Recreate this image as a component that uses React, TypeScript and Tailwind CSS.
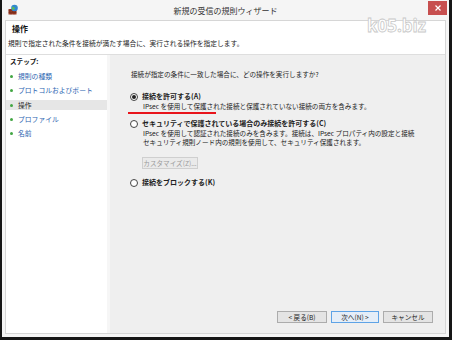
import React from "react";

const F = { fontFamily: '"Noto Sans CJK JP", "Noto Sans", sans-serif' };

function Radio({ on }: { on?: boolean }) {
  return (
    <div className="w-[8px] h-[8px] rounded-full border border-[#444] bg-white flex items-center justify-center shrink-0">
      {on && <div className="w-[4px] h-[4px] rounded-full bg-[#222]" />}
    </div>
  );
}

function Icon() {
  return (
    <svg width="11" height="11" viewBox="0 0 11 11">
      <rect x="0.5" y="5" width="8" height="5.5" fill="#9c3b25" />
      <path d="M0.5 6.8h8M0.5 8.6h8M3 5v1.8M6 5v1.8M1.8 6.8v1.8M4.6 6.8v1.8M7.2 6.8v1.8M3 8.6v1.9M6 8.6v1.9" stroke="#6a2414" strokeWidth="0.5" />
      <circle cx="6.5" cy="4" r="3.3" fill="#2f86d6" />
      <path d="M4.5 2.5c1 0 1.4 1 2.2 1.2s.6 1.4-.4 1.5-.8 1.2-1.6.9S3.6 4.5 4 3.6 3.8 2.5 4.5 2.5z" fill="#5cb85c" />
      <path d="M7.6 1.4c.8.2 1.4.8 1.6 1.4-.6.2-1-.3-1.5-.5z" fill="#5cb85c" />
    </svg>
  );
}

function Step({ label, active }: { label: string; active?: boolean }) {
  return (
    <div className={`h-[10px] flex items-center pl-[4px] ${active ? "bg-[#e6e6e6]" : ""}`}>
      <div className="w-[3px] h-[3px] rounded-full bg-[#43a643] shrink-0" />
      <span className={`ml-[5px] text-[6.8px] leading-[9px] ${active ? "text-[#222]" : "text-[#2a63b0]"}`}>{label}</span>
    </div>
  );
}

function Btn({ label, w, def, disabled }: { label: string; w: string; def?: boolean; disabled?: boolean }) {
  return (
    <div
      className={`${w} h-[12px] flex items-center justify-center text-[6.6px] leading-[9px] border ${
        def ? "border-[#5ea3e6] bg-[#e5eef8]" : disabled ? "border-[#cfcfcf] bg-[#eaeaea]" : "border-[#acacac] bg-[#e4e4e4]"
      } ${disabled ? "text-[#9a9a9a]" : "text-[#222]"}`}
    >
      {label}
    </div>
  );
}

export default function App() {
  return (
    <div style={F} className="relative w-[452px] h-[340px] bg-white">
      <div className="w-[452px] h-[340px] bg-[#f5f5f5] border-l-[2px] border-r-[3px] border-b-[3px] border-[#161616] flex flex-col">
        {/* title bar */}
        <div className="h-[20px] relative flex items-center justify-center">
          <div className="absolute left-[6px] top-[4px]">
            <Icon />
          </div>
          <span className="text-[8px] text-[#333] leading-[10px] mt-[1px]">新規の受信の規則ウィザード</span>
          <div className="absolute right-[2px] top-[1px] w-[19px] h-[14px] bg-[#c74f4f] flex items-center justify-center">
            <svg width="6" height="6" viewBox="0 0 6 6">
              <path d="M0.5 0.5L5.5 5.5M5.5 0.5L0.5 5.5" stroke="#fff" strokeWidth="1.2" />
            </svg>
          </div>
        </div>
        {/* client */}
        <div className="flex-1 mx-[3px] mb-[3px] border border-[#d6d6d6] flex flex-col bg-[#f0f0f0]">
          <div className="h-[34px] bg-white flex flex-col border-b border-[#dedede]">
            <div className="pl-[6px] pt-[3px] text-[8px] leading-[10px] font-bold text-[#111]">操作</div>
            <div className="pl-[2px] mt-[4.5px] text-[6.75px] leading-[9px] text-[#222]">
              規則で指定された条件を接続が満たす場合に、実行される操作を指定します。
            </div>
          </div>
          <div className="flex-1 flex">
            {/* left steps */}
            <div className="w-[104px] bg-white border-r-[3px] border-[#f6f6f6] flex flex-col">
              <div className="pl-[4px] pt-[2px] text-[6.6px] leading-[9px] font-bold text-[#111]">ステップ:</div>
              <div className="mt-[5.5px] flex flex-col gap-[4.3px]">
                <Step label="規則の種類" />
                <Step label="プロトコルおよびポート" />
                <Step label="操作" active />
                <Step label="プロファイル" />
                <Step label="名前" />
              </div>
            </div>
            {/* right content */}
            <div className="flex-1 flex flex-col bg-[#efefef]">
              <div className="pl-[21px] pt-[14.5px] flex flex-col text-[#222]">
                <div className="text-[6.6px] leading-[9px]">接続が指定の条件に一致した場合に、どの操作を実行しますか?</div>
                <div className="mt-[13.7px] flex items-center h-[9px] -ml-[1px]">
                  <Radio on />
                  <span className="ml-[4px] text-[7px] leading-[9px] font-bold">接続を許可する(A)</span>
                </div>
                <div className="mt-[1px] pl-[12px] text-[6.6px] leading-[9px]">
                  IPsec を使用して保護された接続と保護されていない接続の両方を含みます。
                </div>
                <div className="mt-[8.3px] flex items-center h-[9px] -ml-[1px]">
                  <Radio />
                  <span className="ml-[4px] text-[7px] leading-[9px] font-bold">セキュリティで保護されている場合のみ接続を許可する(C)</span>
                </div>
                <div className="mt-[0.3px] pl-[12px] text-[6.6px] leading-[9px]">
                  <div>IPsec を使用して認証された接続のみを含みます。接続は、IPsec プロパティ内の設定と接続</div>
                  <div>セキュリティ規則ノード内の規則を使用して、セキュリティ保護されます。</div>
                </div>
                <div className="mt-[10.5px] pl-[11px]">
                  <Btn label="カスタマイズ(Z)..." w="w-[56px]" disabled />
                </div>
                <div className="mt-[9.2px] flex items-center h-[9px] -ml-[1px]">
                  <Radio />
                  <span className="ml-[4px] text-[7px] leading-[9px] font-bold">接続をブロックする(K)</span>
                </div>
              </div>
              <div className="flex-1" />
              <div className="flex justify-end pr-[12px] pb-[10px] gap-[4px]">
                <Btn label="< 戻る(B)" w="w-[50px]" />
                <Btn label="次へ(N) >" w="w-[48px]" def />
                <Btn label="キャンセル" w="w-[50px]" />
              </div>
            </div>
          </div>
        </div>
      </div>
      {/* annotation underline */}
      <div className="absolute left-[128px] top-[112px] w-[88px] h-[2px] bg-[#e8141b]" />
      {/* watermark */}
      <div
        className="absolute left-[367px] top-[16px] text-[17px] leading-[20px] font-bold text-white [-webkit-text-stroke:0.8px_#c8c8c8]"
        style={{ fontFamily: '"Open Sans", sans-serif' }}
      >
        k05.biz
      </div>
    </div>
  );
}
